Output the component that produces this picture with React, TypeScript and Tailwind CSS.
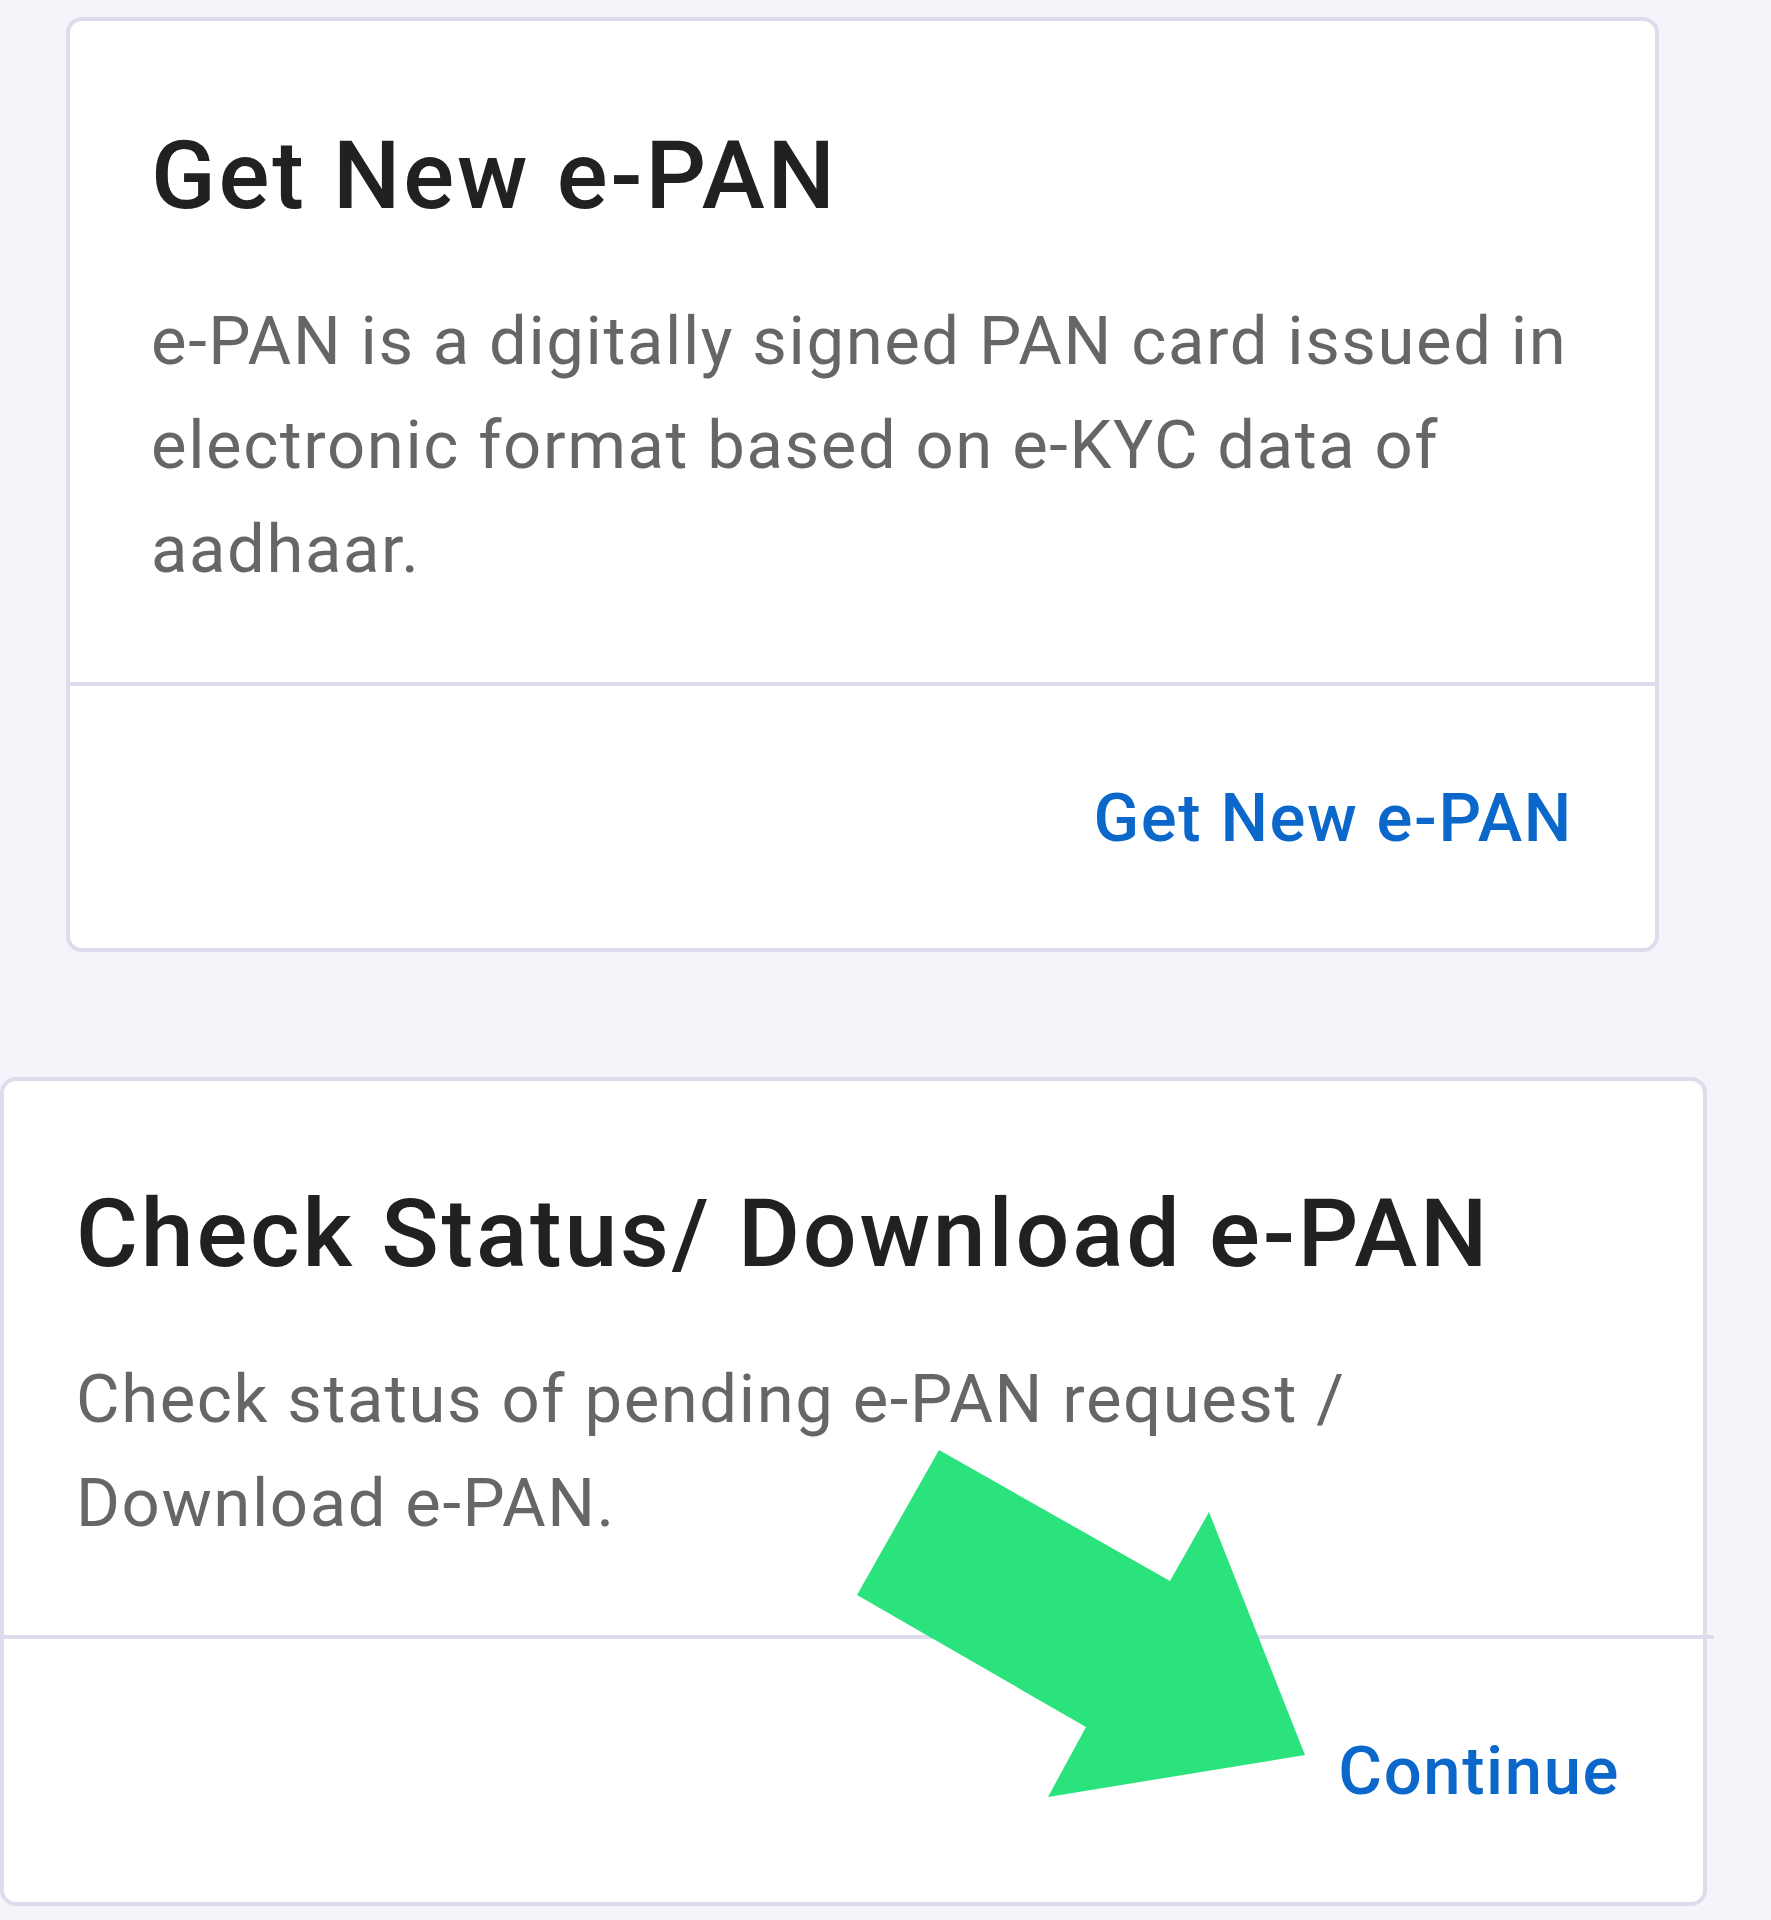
import React from 'react';

const font = { fontFamily: 'Roboto, "Noto Sans", sans-serif' };

const EpanCard: React.FC<{
  title: string;
  text: string;
  action: string;
  className: string;
  bodyPad: string;
  textWidth: string;
  footPad: string;
  dividerClass?: string;
}> = ({ title, text, action, className, bodyPad, textWidth, footPad, dividerClass }) => (
  <div className={`bg-white border-[4px] border-[#dcdcec] rounded-[16px] ${className}`}>
    <div className={bodyPad}>
      <h2 className="text-[95px] leading-[114px] font-medium text-[#212121] tracking-[2.8px] whitespace-nowrap">{title}</h2>
      <p className={`mt-[56px] text-[67px] leading-[104px] text-[#666666] tracking-[1.6px] ${textWidth}`}>{text}</p>
    </div>
    <div className={`h-[4px] bg-[#dcdcec] ${dividerClass ?? ''}`} />
    <div className={`flex justify-end ${footPad}`}>
      <button className="text-[67px] leading-[104px] font-medium text-[#0b67ca] tracking-[1.6px]">{action}</button>
    </div>
  </div>
);

export default function App() {
  return (
    <div className="relative w-full min-h-[1920px] bg-[#f4f5fa] pt-[17px] overflow-hidden" style={font}>
      <EpanCard
        title="Get New e-PAN"
        text="e-PAN is a digitally signed PAN card issued in electronic format based on e-KYC data of aadhaar."
        action="Get New e-PAN"
        className="ml-[66px] w-[1593px]"
        bodyPad="pt-[98px] pb-[81px] pl-[81px] pr-[40px]"
        textWidth="max-w-[1440px]"
        footPad="pt-[80px] pb-[78px] pr-[82px]"
      />
      <EpanCard
        title="Check Status/ Download e-PAN"
        text="Check status of pending e-PAN request / Download e-PAN."
        action="Continue"
        className="mt-[125px] w-[1707px]"
        bodyPad="pt-[96px] pb-[80px] pl-[72px] pr-[40px]"
        textWidth="max-w-[1330px]"
        footPad="pt-[80px] pb-[79px] pr-[83px]"
        dividerClass="-mr-[11px]"
      />

      {/* green pointer arrow drawn over the second card */}
      <svg className="absolute left-0 top-0 pointer-events-none" width="1771" height="1920" viewBox="0 0 1771 1920">
        <polygon
          points="939,1450 1170,1581 1209,1512 1305,1755 1048,1797 1086,1727 857,1595"
          fill="#2ae37d"
        />
      </svg>
    </div>
  );
}
